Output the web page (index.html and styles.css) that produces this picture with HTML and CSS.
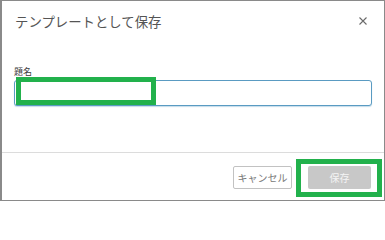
FILE: index.html
```html
<!DOCTYPE html>
<html lang="ja">
<head>
<meta charset="utf-8">
<title>テンプレートとして保存</title>
<link rel="stylesheet" href="styles.css">
</head>
<body>
<div class="dialog">
  <div class="header">
    <h1 class="title">テンプレートとして保存</h1>
    <button class="close" aria-label="閉じる">
      <svg width="8" height="8" viewBox="0 0 8 8"><path d="M0.5 0.5 L7.5 7.5 M7.5 0.5 L0.5 7.5" stroke="#6a6a6a" stroke-width="1.1" fill="none"/></svg>
    </button>
  </div>
  <div class="body">
    <label class="label" for="name">題名</label>
    <input id="name" class="input" type="text">
  </div>
  <div class="footer">
    <button class="btn btn-cancel">キャンセル</button>
    <button class="btn btn-save">保存</button>
  </div>
  <div class="mark mark-input"></div>
  <div class="mark mark-save"></div>
</div>
</body>
</html>
```

FILE: styles.css
```css
html, body {
  margin: 0;
  padding: 0;
  background: #ffffff;
}
.dialog {
  position: relative;
  width: 385px;
  height: 201px;
  box-sizing: border-box;
  border: 1px solid #8a8a8a;
  border-left-width: 2px;
  display: flex;
  flex-direction: column;
  font-family: "Noto Sans CJK JP", "Noto Sans", sans-serif;
  background: #ffffff;
}
.header {
  display: flex;
  align-items: center;
  justify-content: space-between;
  padding: 10px 17px 0 13px;
  height: 20px;
}
.title {
  margin: 0;
  font-size: 13.4px;
  font-weight: 400;
  line-height: 20px;
  color: #555555;
}
.close {
  border: 0;
  background: none;
  padding: 0;
  width: 8px;
  height: 8px;
  display: flex;
}
.body {
  display: flex;
  flex-direction: column;
  padding: 35px 12px 0 12px;
  height: 86px;
}
.label {
  font-size: 9px;
  line-height: 12px;
  color: #3c3c3c;
}
.input {
  margin: 2px 0 0 0;
  height: 26px;
  box-sizing: border-box;
  border: 1px solid #5a9bc2;
  border-radius: 3px;
  box-shadow: 0 1px 1px rgba(90, 155, 194, 0.35);
  outline: none;
  padding: 0 6px;
  font-size: 11px;
}
.footer {
  flex: 1;
  display: flex;
  justify-content: flex-end;
  align-items: flex-start;
  gap: 16px;
  border-top: 1px solid #dcdcdc;
  padding: 13px 13px 0 0;
}
.btn {
  height: 23px;
  box-sizing: border-box;
  font-family: "Noto Sans CJK JP", "Noto Sans", sans-serif;
  font-size: 10px;
  border-radius: 2px;
  padding: 0;
}
.btn-cancel {
  width: 59px;
  border: 1px solid #c2c2c2;
  background: #ffffff;
  color: #777777;
}
.btn-save {
  width: 63px;
  border: 0;
  background: #c8c8c8;
  color: #f4f4f4;
}
.mark {
  position: absolute;
  box-sizing: border-box;
  border: 5px solid #22b14c;
  pointer-events: none;
}
.mark-input {
  left: 14px;
  top: 76px;
  width: 140px;
  height: 28px;
}
.mark-save {
  left: 294px;
  top: 158px;
  width: 86px;
  height: 38px;
}
```
